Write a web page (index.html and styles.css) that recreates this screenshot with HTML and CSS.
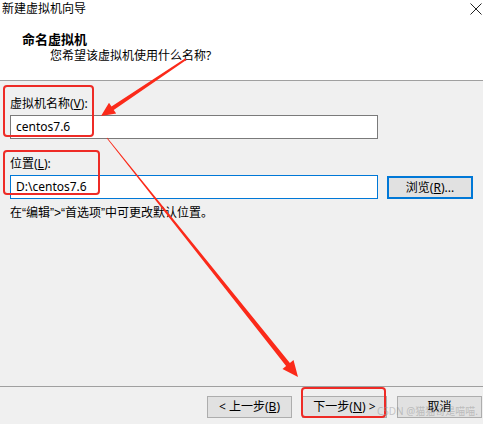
FILE: index.html
```html
<!DOCTYPE html>
<html lang="zh-CN">
<head>
  <meta charset="UTF-8">
  <title>新建虚拟机向导</title>
  <link rel="stylesheet" href="styles.css">
</head>
<body>
  <div class="wizard">
    <div class="header">
      <div class="titlebar">
        <span class="title">新建虚拟机向导</span>
        <svg class="close" width="12" height="12" viewBox="0 0 12 12">
          <path d="M0.5 0.5 L11.5 11.5 M11.5 0.5 L0.5 11.5" stroke="#222" stroke-width="1" fill="none"/>
        </svg>
      </div>
      <div class="heading">命名虚拟机</div>
      <div class="subheading">您希望该虚拟机使用什么名称?</div>
    </div>

    <div class="content">
      <div class="label">虚拟机名称(<u>V</u>):</div>
      <div class="field">centos7.6</div>

      <div class="label label-second">位置(<u>L</u>):</div>
      <div class="row">
        <div class="field field-focus">D:\centos7.6</div>
        <div class="btn btn-default">浏览(<u>R</u>)...</div>
      </div>

      <div class="hint">在<span class="q">“</span>编辑<span class="q">”&gt;“</span>首选项<span class="q">”</span>中可更改默认位置。</div>
    </div>

    <div class="footer">
      <div class="btn">&lt; 上一步(<u>B</u>)</div>
      <div class="btn">下一步(<u>N</u>) &gt;</div>
      <div class="btn">取消</div>
    </div>
  </div>

  <!-- red annotations drawn on top of the screenshot -->
  <svg class="marks" width="483" height="424" viewBox="0 0 483 424">
    <rect x="4" y="86" width="89" height="50" rx="3" class="box"/>
    <rect x="4" y="151" width="95" height="43" rx="3" class="box"/>
    <rect x="302" y="388" width="83" height="29" rx="3" class="box"/>
    <polygon class="arrow" points="185.4,58.2 111.5,106.5 109.0,102.8 101,116 116.2,113.6 113.7,109.9 186.6,59.8"/>
    <polygon class="arrow" points="107.3,137.8 289.9,363.0 293.5,360.1 298,377 282.5,368.9 286.1,366.0 106.7,138.3"/>
  </svg>

  <div class="watermark">CSDN @猫猫哥是喵喵.</div>
</body>
</html>
```

FILE: styles.css
```css
/* Wizard window */
body {
  margin: 0;
  padding: 0;
  width: 483px;
  height: 424px;
  overflow: hidden;
  position: relative;
  font-family: "Noto Sans", "Noto Sans CJK SC", sans-serif;
  font-size: 12px;
  line-height: 16px;
  color: #000;
  background-color: #f0f0f0;
}

.wizard {
  display: flex;
  flex-direction: column;
  height: 424px;
}

/* white top part */
.header {
  height: 80px;
  background-color: #fff;
  border-bottom: 1px solid #a0a0a0;
}

.titlebar {
  display: flex;
  justify-content: space-between;
  align-items: flex-start;
  height: 30px;
  padding: 1px 1px 0 2px;
}

.close {
  margin-top: 2px;
}

.heading {
  padding-left: 22px;
  font-size: 13px;
  font-weight: bold;
  line-height: 17px;
}

.subheading {
  padding-left: 50px;
}

/* form part */
.content {
  flex: 1;
  padding: 15px 0 0 10px;
}

.label-second {
  margin-top: 17px;
}

.field {
  box-sizing: border-box;
  width: 368px;
  height: 24px;
  margin-top: 3px;
  padding: 0 5px;
  line-height: 22px;
  background-color: #fff;
  border: 1px solid #7a7a7a;
}

.field-focus {
  border-color: #0078d7;
}

.row {
  display: flex;
  align-items: center;
  gap: 9px;
  margin-top: 3px;
}

.row .field {
  margin-top: 0;
}

.hint {
  margin-top: 6px;
}

.q {
  font-family: "Liberation Sans", sans-serif;
}

/* buttons */
.btn {
  box-sizing: border-box;
  width: 85px;
  height: 22px;
  line-height: 20px;
  text-align: center;
  background-color: #e1e1e1;
  border: 1px solid #adadad;
}

.btn-default {
  width: 86px;
  height: 23px;
  line-height: 19px;
  border: 2px solid #0078d7;
}

.footer {
  display: flex;
  justify-content: flex-end;
  gap: 10px;
  height: 38px;
  box-sizing: border-box;
  padding: 9px 1px 0 0;
  border-top: 1px solid #a0a0a0;
}

/* annotations */
.marks {
  position: absolute;
  left: 0;
  top: 0;
  pointer-events: none;
}

.box {
  fill: none;
  stroke: #ee2b26;
  stroke-width: 2;
}

.arrow {
  fill: #fb2a1a;
}

.watermark {
  position: absolute;
  left: 377px;
  top: 405px;
  font-size: 10px;
  line-height: 13px;
  white-space: nowrap;
  color: rgba(150, 150, 150, 0.5);
}
```
